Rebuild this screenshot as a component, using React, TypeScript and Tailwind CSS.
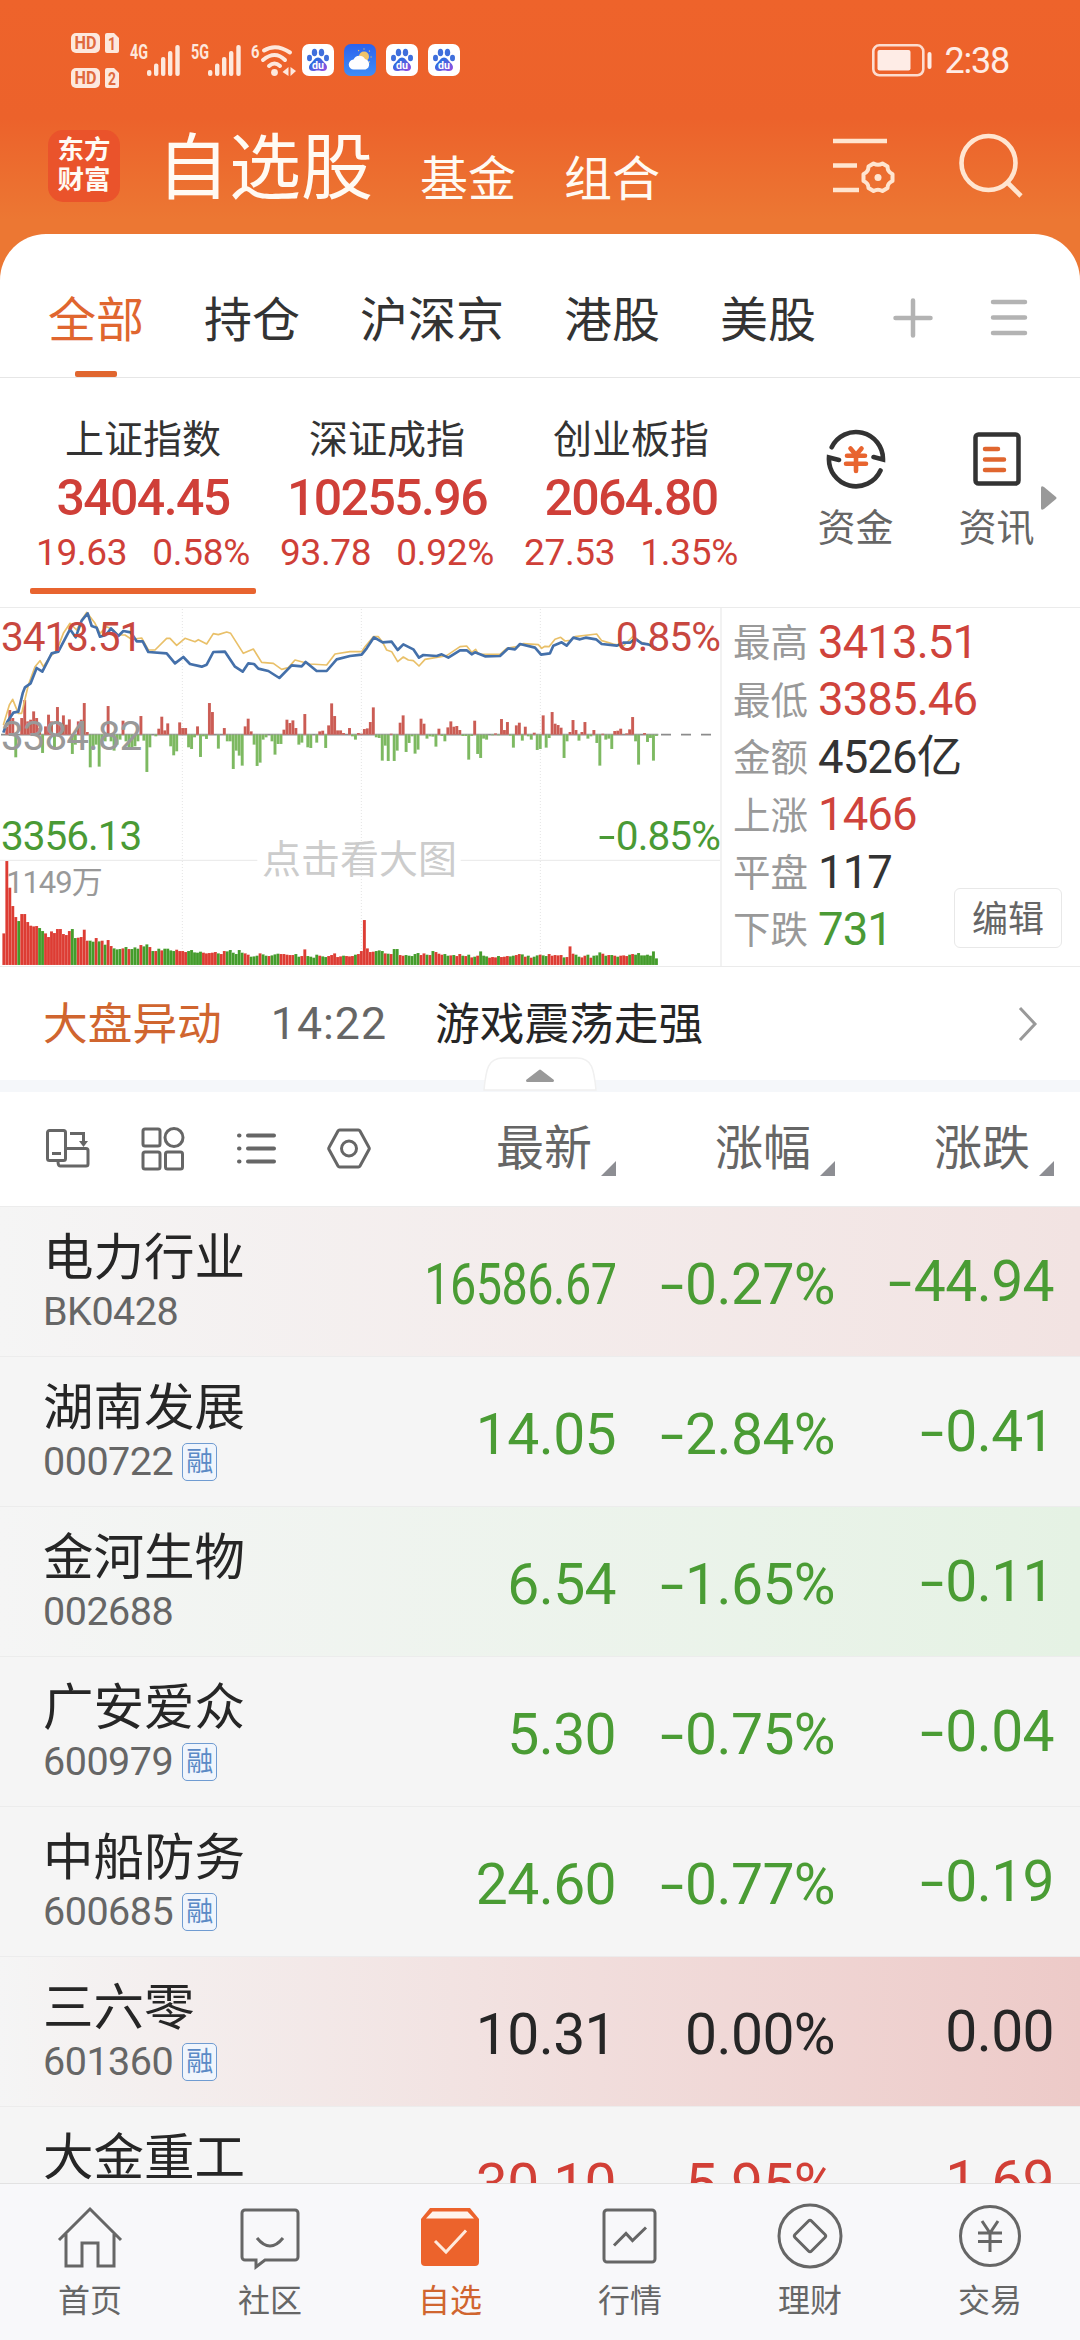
import type { ReactNode } from "react";

const tabs = ["全部", "持仓", "沪深京", "港股", "美股"];

const indexes = [
  { name: "上证指数", value: "3404.45", diff: "19.63", pct: "0.58%" },
  { name: "深证成指", value: "10255.96", diff: "93.78", pct: "0.92%" },
  { name: "创业板指", value: "2064.80", diff: "27.53", pct: "1.35%" },
];

const stats = [
  { label: "最高", value: "3413.51", color: "text-[#cf433b]" },
  { label: "最低", value: "3385.46", color: "text-[#cf433b]" },
  { label: "金额", value: "4526亿", color: "text-[#333333]" },
  { label: "上涨", value: "1466", color: "text-[#cf433b]" },
  { label: "平盘", value: "117", color: "text-[#333333]" },
  { label: "下跌", value: "731", color: "text-[#4a9a35]" },
];

const green = "text-[#4a9c34]";
const plain = "bg-[#f5f5f5]";

const stocks = [
  { name: "电力行业", code: "BK0428", price: "16586.67", pct: "-0.27%", diff: "-44.94", color: green, bg: "bg-linear-to-r from-[#f5f5f5] to-[#f2e3e2]", rong: false },
  { name: "湖南发展", code: "000722", price: "14.05", pct: "-2.84%", diff: "-0.41", color: green, bg: plain, rong: true },
  { name: "金河生物", code: "002688", price: "6.54", pct: "-1.65%", diff: "-0.11", color: green, bg: "bg-linear-to-r from-[#f5f5f5] to-[#e5f2e4]", rong: false },
  { name: "广安爱众", code: "600979", price: "5.30", pct: "-0.75%", diff: "-0.04", color: green, bg: plain, rong: true },
  { name: "中船防务", code: "600685", price: "24.60", pct: "-0.77%", diff: "-0.19", color: green, bg: plain, rong: true },
  { name: "三六零", code: "601360", price: "10.31", pct: "0.00%", diff: "0.00", color: "text-[#262626]", bg: "bg-linear-to-r from-[#f5f5f5] to-[#edcac8]", rong: true },
  { name: "大金重工", code: "", price: "30.10", pct: "5.95%", diff: "1.69", color: "text-[#d23f36]", bg: plain, rong: false },
];

// minute bars, negative = below the zero line
const flow = [
  0, 24, 74, 50, -68, 0, 50, 104, 40, 45, 70, 50, 20, -55, 25, 60, 40, -40, 83, 30, 58, 30, 46, -58, -30, 40, 45, 95, 8, -98,
  -35, -30, -96, -15, -20, 86, -20, -48, -30, -15, 42, -20, -40, -45, -35, -20, 56, -18, -112, -38, 0, -5, 18, 54, 13, 34, -35, -62, -50, 37,
  20, 20, -38, -43, -8, 25, -67, -5, -13, 95, 68, 0, -42, 0, 20, -20, -20, -103, -48, -63, -93, 25, 48, 10, -30, -94, -84, -15, -8, 0,
  -20, -60, -28, -28, 15, 45, 35, 43, 20, -30, -24, 62, -38, -40, 0, -24, 10, 12, -40, 28, 94, 56, 13, 13, 5, 0, 20, -5, -15, 5,
  3, 17, 19, 38, 82, -8, -10, -78, -33, -79, 3, -79, -48, 36, 58, -52, -25, -5, -57, -45, 48, 33, -12, -5, -6, -36, 18, -4, -20, 22,
  40, 24, 26, 14, -4, -4, -75, -4, 42, -58, -70, -12, -15, 0, -2, 4, -2, 47, 14, 38, -3, -39, 28, 36, -18, 24, -5, -15, 6, -46,
  -43, 58, -39, -10, 68, 33, 29, 21, -70, -20, 8, 44, 14, -18, 8, 38, -12, -5, 14, -25, -93, 3, -15, -12, -43, 11, 12, 18, 0, 4,
  16, 53, -20, -90, 0, 5, -22, -10, -78, -4,
];

// traded volume, negative = green bar
const volume = [
  95, 312, 232, 177, 144, -132, 153, 153, 129, 118, 116, 117, -111, -102, 95, 84, 101, 96, 108, 108, 93, 90, 102, -108, -81, 82, 84, 106, 73, -73,
  -70, 81, -71, 73, -61, 75, 57, -50, -47, -48, 50, -54, 48, -48, -53, -49, 60, -56, -62, 54, -42, 42, -49, 44, -49, -49, -44, -42, 46, 42,
  42, 39, -42, -45, -38, -37, -40, 37, 35, 36, 37, 39, -35, 33, 42, -41, -45, -37, -33, -45, -37, 35, 31, -25, -26, -28, 35, -32, -28, 27,
  -29, -32, -34, 33, 33, 31, 30, 30, -33, -25, 27, 47, -27, -25, -22, -31, 28, -26, -24, 27, 30, 35, 24, 26, -28, 27, 26, 27, -31, 33,
  42, 135, 50, 39, 40, -42, -44, -42, 35, -34, 33, -48, -48, 30, 28, -30, -28, -27, -33, -36, 30, 35, -31, 30, -42, 39, 34, 31, -33, -28,
  29, -30, 27, 33, -28, 27, -31, 23, -25, 28, -41, -28, -26, 22, 24, 23, -27, 24, 25, 27, -26, -28, 30, 33, -32, 25, -28, 22, -25, -29,
  31, -29, -27, 33, 28, 30, 29, 30, -23, 24, 56, 34, -31, -25, 23, 28, -31, 22, -28, -29, -38, 34, -28, 30, -30, 28, -25, 28, 29, 27,
  -31, 33, -31, -36, -29, -29, -31, -28, -41, -20,
];

const priceLine =
  "10,398 22,365 40,338 55,335 68,280 75,262 92,250 110,204 127,215 155,160 175,155 210,88 227,112 245,62 263,40 275,78 290,83 300,110 318,105 333,85 355,108 370,93 392,97 410,124 428,124 445,156 500,160 525,190 550,171 570,192 605,200 620,194 640,156 675,155 705,200 728,215 745,190 762,192 775,206 805,213 838,234 875,196 905,199 917,186 950,213 980,213 1010,178 1050,168 1085,164 1100,145 1122,112 1148,127 1175,125 1193,150 1210,133 1240,148 1257,173 1270,165 1310,168 1325,163 1345,173 1380,151 1400,151 1415,163 1425,157 1455,169 1500,168 1525,145 1545,148 1560,132 1605,143 1623,164 1650,160 1660,137 1685,127 1700,137 1720,113 1740,118 1757,113 1788,118 1805,132 1850,137 1870,128 1890,128 1905,116 1925,130 1945,133 1970,145";

const averageLine =
  "10,375 28,315 38,298 55,340 65,340 85,255 105,200 120,182 130,200 150,170 170,152 190,100 210,70 230,90 245,60 260,37 285,70 300,100 320,80 340,90 355,105 375,105 395,118 425,114 445,150 465,150 500,115 510,115 530,136 555,115 585,125 595,119 620,132 640,101 655,104 680,96 692,100 730,160 760,147 785,187 820,190 845,208 865,203 885,180 930,192 980,195 1005,162 1050,155 1085,155 1095,140 1120,110 1135,110 1148,127 1160,150 1175,155 1193,185 1210,171 1225,180 1240,182 1257,198 1275,178 1340,167 1380,140 1400,138 1415,157 1427,148 1435,162 1500,163 1520,145 1550,140 1570,131 1615,134 1625,145 1635,139 1647,140 1665,118 1682,112 1695,123 1710,121 1725,110 1790,102 1805,122 1840,132 1870,138 1900,108 1920,125 1965,142";

function HdBadge({ sim }: { sim: string }) {
  return (
    <svg className="overflow-visible" width="48" height="20" viewBox="0 0 48 20">
      <rect x="0" y="0" width="29" height="20" rx="5" fill="#fde8dd" />
      <path d="M34 2a2 2 0 0 1 2-2h7l5 5v13a2 2 0 0 1-2 2H36a2 2 0 0 1-2-2z" fill="#fde8dd" />
      <text x="3.5" y="16.2" fontSize="17.5" fontWeight="700" textLength="22" lengthAdjust="spacingAndGlyphs" fill="#e0693d">HD</text>
      <text x="37" y="16.5" fontSize="17.5" fontWeight="700" textLength="8" lengthAdjust="spacingAndGlyphs" fill="#e0693d">{sim}</text>
    </svg>
  );
}

function Signal({ label }: { label: string }) {
  return (
    <svg className="overflow-visible" width="51" height="34" viewBox="0 0 51 34" fill="#fde8dd">
      <text x="0" y="16" fontSize="19.5" fontWeight="700" textLength="18" lengthAdjust="spacingAndGlyphs">{label}</text>
      <rect x="17" y="27" width="4.4" height="6" rx="2" />
      <rect x="24" y="20.5" width="4.4" height="12.5" rx="2" />
      <rect x="31" y="14" width="4.4" height="19" rx="2" />
      <rect x="38" y="8" width="4.4" height="25" rx="2" />
      <rect x="45.3" y="2" width="4.4" height="31" rx="2" />
    </svg>
  );
}

function Wifi() {
  return (
    <svg className="overflow-visible" width="45" height="34" viewBox="0 0 45 34" fill="none" stroke="#fde8dd" strokeWidth="4" strokeLinecap="round">
      <text x="0" y="15" fontSize="19" fontWeight="700" textLength="8.5" lengthAdjust="spacingAndGlyphs" fill="#fde8dd" stroke="none">6</text>
      <path d="M13 7.5Q25 0 39 9.500M12 17Q24 7 34 17M18 23Q23.500 18 29 23" />
      <circle cx="23.5" cy="29.5" r="3.4" fill="#fde8dd" stroke="none" />
      <path d="M37.500 24v9l-6-4zM39.500 24v9l5.500-5z" fill="#fde8dd" stroke="none" />
    </svg>
  );
}

function Baidu() {
  return (
    <svg className="overflow-visible" width="32" height="32" viewBox="0 0 32 32">
      <defs>
        <linearGradient id="paw" x1="0" y1="0" x2="1" y2="1">
          <stop offset="0.3" stopColor="#2f6be0" />
          <stop offset="1" stopColor="#9a4be0" />
        </linearGradient>
      </defs>
      <rect width="32" height="32" rx="7" fill="#fff" />
      <ellipse cx="12.5" cy="8.5" rx="2.7" ry="3.8" fill="#3f6fdc" />
      <ellipse cx="19.5" cy="8.5" rx="2.7" ry="3.8" fill="#3f6fdc" />
      <ellipse cx="7.5" cy="14" rx="2.5" ry="3.3" fill="#3f6fdc" />
      <ellipse cx="24.5" cy="14" rx="2.5" ry="3.3" fill="#3f6fdc" />
      <path d="M16 13.500c3 0 4 3 6.500 5.200 4 3.300 3 8.300-1.500 8.300-2 0-3-.5-5-.5s-3 .5-5 .5c-4.500 0-5.500-5-1.500-8.300C12 16.500 13 13.500 16 13.500z" fill="url(#paw)" />
      <text x="10" y="25" fontSize="10.5" fontWeight="700" textLength="12" lengthAdjust="spacingAndGlyphs" fill="#fff">du</text>
    </svg>
  );
}

function Weather() {
  return (
    <svg width="32" height="32" viewBox="0 0 32 32">
      <defs>
        <linearGradient id="sky" x1="0" y1="0" x2="0" y2="1">
          <stop offset="0" stopColor="#2c62ee" />
          <stop offset="1" stopColor="#3f8df5" />
        </linearGradient>
      </defs>
      <rect width="32" height="32" rx="7" fill="url(#sky)" />
      <circle cx="20" cy="12.5" r="5" fill="#f0c468" />
      <path d="M20 5.500v-1M15 7l-.7-.8M25 7.500l.8-.8M26.500 13h1.200M25 17.500l.8.8" stroke="#f0c468" strokeWidth="1.2" />
      <path d="M10 25.500a5 5 0 0 1-.5-10 6.500 6.500 0 0 1 11.500-.5 5.500 5.500 0 0 1 .5 10.500z" fill="#fdfdff" />
    </svg>
  );
}

function StatusBar() {
  return (
    <div className="flex h-[120px] items-center pl-[71px]">
      <div className="flex w-[48px] flex-col gap-[15px]">
        <HdBadge sim="1" />
        <HdBadge sim="2" />
      </div>
      <div className="ml-[11px] flex items-center gap-[10px]">
        <Signal label="4G" />
        <Signal label="5G" />
      </div>
      <div className="ml-[9px]"><Wifi /></div>
      <div className="ml-[6px] flex gap-[10px]">
        <Baidu />
        <Weather />
        <Baidu />
        <Baidu />
      </div>
      <svg className="ml-auto" width="60" height="34" viewBox="0 0 60 34" fill="#feece6">
        <rect x="1.3" y="2.3" width="50" height="30" rx="6" fill="none" stroke="#fcdccf" strokeWidth="2.6" />
        <rect x="5.5" y="7" width="33" height="20.5" rx="2" />
        <rect x="55.5" y="9" width="4" height="17" rx="2" />
      </svg>
      <span className="mr-[71px] ml-[12px] pt-[2px] text-[36px] leading-none tracking-[-1.2px] text-[#feece6]">2:38</span>
    </div>
  );
}

function TitleBar() {
  return (
    <div className="flex h-[114px] items-center pb-[22px] text-[#fffaf3]">
      <div className="ml-[48px] flex h-[72px] w-[72px] flex-col items-center justify-center rounded-[15px] bg-[#ea532b] pb-[2px] text-[26.5px] leading-[30px] font-bold">
        <span>东方</span>
        <span>财富</span>
      </div>
      <span className="mt-[5px] ml-[37px] text-[72px] leading-[74px]">自选股</span>
      <span className="mt-[28px] ml-[47px] text-[48px] leading-none">基金</span>
      <span className="mt-[28px] ml-[48px] text-[48px] leading-none">组合</span>
      <svg className="ml-auto" width="64" height="60" viewBox="0 0 64 60" fill="none" stroke="#ffe5d0" strokeWidth="4.6">
        <path d="M1 5H55M1 29.500H25M1 54H27" />
        <path d="M41.500 27.500q4.500 2.500 9 0l5 3q0 5.500 5 7.500v7q-5 2-5 7l-5 3q-4.500-2.500-9 0l-5-3q0-5-5-7v-7q5-2 5-7.500z" strokeLinejoin="round" strokeWidth="4" />
        <circle cx="46" cy="41.5" r="3.5" fill="#ffe5d0" stroke="none" />
      </svg>
      <svg className="mr-[57px] ml-[63px]" width="64" height="66" viewBox="0 0 64 66" fill="none" stroke="#ffe5d0" strokeWidth="4.6">
        <circle cx="29.5" cy="30" r="27" />
        <path d="M48 49L62 63" />
      </svg>
    </div>
  );
}

function Tabs() {
  return (
    <div className="flex h-[144px] items-center gap-[60px] border-b border-[#e6e6e6] pl-[48px] text-[48px] text-[#333333]">
      {tabs.map((tab, i) => (
        <div key={tab} className={i === 0 ? "flex h-full flex-col items-center text-[#e0662f]" : "flex h-full flex-col"}>
          <span className="mt-[51px] mb-[20px] h-[66px] leading-[72px]">{tab}</span>
          {i === 0 && <i className="h-[6px] w-[42px] rounded-[2px] bg-[#e0662f]" />}
        </div>
      ))}
      <svg className="mt-[24px] ml-[17px]" width="40" height="40" viewBox="0 0 40 40" stroke="#b3b3b3" strokeWidth="4.5" strokeLinecap="round">
        <path d="M2.500 20H37.500M20 2.500V37.500" />
      </svg>
      <svg className="mt-[24px] -ml-[4px]" width="40" height="40" viewBox="0 0 40 40" stroke="#b3b3b3" strokeWidth="4.5" strokeLinecap="round">
        <path d="M4 4H36M4 19.500H36M4 35H36" />
      </svg>
    </div>
  );
}

function Shortcut({ label, children }: { label: string; children: ReactNode }) {
  return (
    <div className="flex w-[141px] flex-col items-center">
      <div className="flex h-[60px] items-center">{children}</div>
      <span className="mt-[17px] text-[38px] leading-[44px] text-[#666666]">{label}</span>
    </div>
  );
}

function IndexCards() {
  return (
    <div className="flex h-[229px] pl-[21px]">
      {indexes.map((item, i) => (
        <div key={item.name} className="flex w-[244px] flex-col items-center text-[#cf3f38]">
          <span className="mt-[39px] h-[44px] text-[39px] leading-[46px] text-[#333333]">{item.name}</span>
          <span className="mt-[9px] h-[56px] text-[50px] leading-[56px] font-medium tracking-[-1.6px]">{item.value}</span>
          <span className="mt-[5px] flex h-[44px] gap-[25px] text-[37px] leading-[44px] tracking-[-0.3px]">
            <span>{item.diff}</span>
            <span>{item.pct}</span>
          </span>
          {i === 0 && <i className="mt-[13px] h-[6px] w-[226px] rounded-[2px] bg-[#e8642f]" />}
        </div>
      ))}
      <div className="mt-[51px] ml-[32px] flex">
        <Shortcut label="资金">
          <svg width="60" height="60" viewBox="0 0 60 60" fill="none" stroke="#333333" strokeWidth="4.6" strokeLinecap="round">
            <path d="M5.700 18.300A27 27 0 0 1 57 30.500L47.500 28M54.500 41.500A27 27 0 0 1 3 28.500L13 31" />
            <path d="M24.500 19.500L30 26L35.500 19.500M21 26.700H39M20 34.700H40M30 27V42" stroke="#e8642f" />
          </svg>
        </Shortcut>
        <Shortcut label="资讯">
          <svg width="50" height="60" viewBox="0 0 50 60" fill="none" stroke="#333333" strokeWidth="4.5">
            <rect x="3.500" y="5.500" width="43" height="49" rx="3" />
            <path d="M13 20H26M13 30.500H32M13 41H32" stroke="#e0662f" strokeLinecap="round" />
          </svg>
        </Shortcut>
      </div>
      <svg className="-ml-[27px] mt-[107px]" width="17" height="26" viewBox="0 0 17 26" fill="#999999">
        <path d="M1 3q0-3 3-1l12 10q1 1 0 2L4 24q-3 2-3-1z" />
      </svg>
    </div>
  );
}

function Chart() {
  return (
    <div className="relative h-[358px] w-[720px] text-[40.5px] leading-none">
      <svg className="block" width="720" height="358" viewBox="0 24 2160 1074">
        <path d="M547 27V1090M1084 27V1090M1621 27V1090" stroke="#e4e4e4" strokeWidth="3" strokeDasharray="3 6" />
        <path d="M0 781H772M1382 781H2160" stroke="#e8e8e8" strokeWidth="3" />
        <path d="M3 404H1975M1983 404h30M2043 404h30M2103 404h30" stroke="#8c8c8c" strokeWidth="5" />
        {flow.map((v, i) =>
          v === 0 ? null : (
            <rect key={i} x={7 + i * 8.94} y={v > 0 ? 404 - v : 404} width="8.94" height={Math.abs(v)} fill={v > 0 ? "#cb5c54" : "#7db961"} stroke="#fff" strokeOpacity="0.25" />
          )
        )}
        {volume.map((v, i) => (
          <rect key={i} x={7 + i * 8.94} y={1095 - Math.abs(v)} width="8.94" height={Math.abs(v)} fill={v > 0 ? "#dd3c33" : "#449c2b"} stroke="#fff" strokeOpacity="0.3" />
        ))}
        <polyline points={averageLine} fill="none" stroke="#e9c069" strokeWidth="5" strokeLinejoin="round" />
        <polyline points={priceLine} fill="none" stroke="#4470aa" strokeWidth="8" strokeLinejoin="round" />
      </svg>
      <span className="absolute top-[9px] left-[1px] tracking-[-1px] text-[#c8473f]">3413.51</span>
      <span className="absolute top-[108px] left-[1px] tracking-[-1px] text-[#999999]">3384.82</span>
      <span className="absolute top-[208px] left-[1px] tracking-[-1px] text-[#4a9a35]">3356.13</span>
      <span className="absolute top-[9px] right-0 tracking-[-0.9px] text-[#c8473f]">0.85%</span>
      <span className="absolute top-[208px] right-0 tracking-[-0.9px] text-[#4a9a35]"><Num text="-0.85%" /></span>
      <span className="absolute top-[259px] left-[6px] text-[31px] tracking-[-1px] text-[#999999]">1149万</span>
      <span className="absolute top-[230px] left-[262px] text-[39px] leading-[44px] text-[#cccccc]">点击看大图</span>
    </div>
  );
}

// the minus sign is drawn wider than the font's hyphen
function Num({ text }: { text: string }) {
  if (!text.startsWith("-")) return <>{text}</>;
  return (
    <>
      <span className="mr-[0.11em] inline-block scale-x-[1.5]">-</span>
      {text.slice(1)}
    </>
  );
}

function Stats() {
  return (
    <div className="relative flex-1 border-l-2 border-[#f2f2f2] pt-[6px] pl-[11px]">
      {stats.map((s) => (
        <div key={s.label} className="flex h-[57.4px] items-center leading-none">
          <span className="mt-[3px] text-[37.5px] text-[#999999]">{s.label}</span>
          <span className={`ml-[10px] text-[45.5px] tracking-[-0.9px] ${s.color}`}>{s.value}</span>
        </div>
      ))}
      <div className="absolute top-[280px] right-[18px] flex h-[60px] w-[108px] items-center justify-center rounded-[6px] border border-[#e8e8e8] bg-white pt-[3px] text-[36px] leading-none text-[#666666]">
        编辑
      </div>
    </div>
  );
}

function News() {
  return (
    <div className="relative flex h-[126px] items-center border-t border-b-12 border-t-[#ebebeb] border-b-[#f5f7fa] pl-[43px] text-[44.7px] leading-none">
      <span className="mt-[4px] text-[#d0652f]">大盘异动</span>
      <span className="mt-[1px] ml-[49px] tracking-[1px] text-[#666666]">14:22</span>
      <span className="mt-[4px] ml-[48px] text-[#262626]">游戏震荡走强</span>
      <svg className="mr-[42px] ml-auto" width="20" height="36" viewBox="0 0 20 36" fill="none" stroke="#999999" strokeWidth="3">
        <path d="M2 2L17 18L2 34" />
      </svg>
      <svg className="absolute top-[90px] left-[483px]" width="114" height="34" viewBox="0 0 114 34">
        <path d="M1 33C3 12 5 1 20 1H94C109 1 111 12 113 33z" fill="#fff" stroke="#f0f0f0" strokeWidth="1.5" />
        <path d="M43 23L56 13q1-1 2 0L71 23q0 2-1 2H44q-1 0-1-2z" fill="#999999" />
      </svg>
    </div>
  );
}

function ListHead() {
  return (
    <div className="flex h-[114px] items-center text-[48px] leading-none text-[#666666]">
      <div className="flex w-[372px] items-center gap-[51px] pl-[46px]">
        <svg width="44" height="44" viewBox="0 0 44 44" fill="none" stroke="#666666" strokeWidth="3">
          <path d="M3.500 3.500h14a2 2 0 0 1 2 2v26a2 2 0 0 1-2 2h-14a2 2 0 0 1-2-2v-26a2 2 0 0 1 2-2zM6 26.500h9" />
          <path d="M20 21.500H40a2 2 0 0 1 2 2V37a2 2 0 0 1-2 2H14q-2 0-2-5M24 6.500H37.500V15" />
          <path d="M33 14h9l-4.500 6z" fill="#666666" stroke="none" />
        </svg>
        <svg width="44" height="44" viewBox="0 0 44 44" fill="none" stroke="#666666" strokeWidth="3">
          <rect x="2" y="2" width="17" height="17" rx="2" />
          <circle cx="33" cy="10.5" r="9" />
          <rect x="2" y="25" width="17" height="17" rx="2" />
          <rect x="24.5" y="25" width="17" height="17" rx="2" />
        </svg>
        <svg width="40" height="44" viewBox="0 0 40 44" fill="none" stroke="#666666" strokeWidth="4" strokeLinecap="round">
          <path d="M3 8.500h.5M3 21.500h.5M3 34.500h.5M12 8.500H38M12 21.500H38M12 34.500H38" />
        </svg>
        <svg width="44" height="44" viewBox="0 0 44 44" fill="none" stroke="#666666" strokeWidth="3">
          <path d="M13 3H31a2 2 0 0 1 2 1L42 20.500a2 2 0 0 1 0 2L33 39a2 2 0 0 1-2 1H13a2 2 0 0 1-2-1L2 22.500a2 2 0 0 1 0-2L11 4a2 2 0 0 1 2-1z" />
          <circle cx="22" cy="21.5" r="7.5" />
        </svg>
      </div>
      {["最新", "涨幅", "涨跌"].map((h, i) => (
        <div key={h} className={i === 0 ? "flex w-[244px] items-center justify-end" : "flex w-[219px] items-center justify-end"}>
          <span>{h}</span>
          <svg className="mt-[38px] ml-[9px]" width="15" height="15" viewBox="0 0 15 15">
            <path d="M15 0V15H0z" fill="#8d8e93" />
          </svg>
        </div>
      ))}
    </div>
  );
}

function StockList() {
  return (
    <div className="h-[977px] overflow-hidden">
      {stocks.map((s) => (
        <div key={s.name} className={`flex h-[150px] items-center border-t border-[#ececec] text-[57px] leading-none tracking-[-0.6px] ${s.bg}`}>
          <div className="w-[372px] pl-[43px]">
            <div className="text-[50.5px] leading-[60px] tracking-normal text-[#262626]">{s.name}</div>
            <div className="flex h-[48px] items-center text-[39.5px] leading-none tracking-[-0.5px] text-[#666666]">
              {s.code}
              {s.rong && (
                <span className="ml-[9px] flex h-[38px] w-[35px] items-center justify-center rounded-[5px] border border-[#6f9bd1] bg-[#f0f5fc] pt-[2px] text-[27px] tracking-normal text-[#5b8ac6]">
                  融
                </span>
              )}
            </div>
          </div>
          <div className={`flex w-[244px] justify-end pt-[6px] ${s.color}`}>
            <span className={s.price.length > 7 ? "origin-right scale-x-[0.82]" : ""}>{s.price}</span>
          </div>
          <div className={`w-[219px] pt-[6px] text-right ${s.color}`}><Num text={s.pct} /></div>
          <div className={`w-[219px] pb-[1px] text-right ${s.color}`}><Num text={s.diff} /></div>
        </div>
      ))}
    </div>
  );
}

const navItems = [
  {
    label: "首页",
    icon: <path d="M3 34L34 3L65 34M10 28V60H26V37H42V60H58V28" />,
  },
  {
    label: "社区",
    icon: <path d="M9 4H59a3 3 0 0 1 3 3V51a3 3 0 0 1-3 3H29L20 61V54H9a3 3 0 0 1-3-3V7a3 3 0 0 1 3-3zM21 32Q34 48 47 32" />,
  },
  {
    label: "自选",
    icon: (
      <>
        <path d="M14 2H54L63 13V56a4 4 0 0 1-4 4H9a4 4 0 0 1-4-4V13z" fill="#ec632c" stroke="none" />
        <path d="M16.500 5.500H51.500L58 12.500H10z" fill="#fff4ec" stroke="none" />
        <path d="M19 35L30 46L50 24.500" stroke="#ffe9dc" />
      </>
    ),
  },
  {
    label: "行情",
    icon: (
      <>
        <rect x="8" y="4" width="51" height="52" rx="3" />
        <path d="M18 39.500L30 27.500L36.500 34.500L50 21.500" />
      </>
    ),
  },
  {
    label: "理财",
    icon: (
      <>
        <circle cx="34" cy="30" r="31" />
        <path d="M32.500 15q1.500-1.500 3 0L49 28.500q1.500 1.500 0 3L35.500 45q-1.500 1.500-3 0L19 31.500q-1.500-1.500 0-3z" />
      </>
    ),
  },
  {
    label: "交易",
    icon: (
      <>
        <circle cx="34" cy="30" r="29.5" />
        <path d="M26 15L34 27L42 15M22 27H46M22 35.500H46M34 26V46" />
      </>
    ),
  },
];

function BottomNav() {
  return (
    <div className="grid h-[157px] grid-cols-6 border-t border-[#e2e2e2] bg-[#f8f8fa]">
      {navItems.map((item, i) => (
        <div key={item.label} className={i === 2 ? "flex flex-col items-center text-[#d0652f]" : "flex flex-col items-center text-[#666666]"}>
          <svg className="mt-[22px] overflow-visible" width="68" height="64" viewBox="0 0 68 64" fill="none" stroke="#666666" strokeWidth="3">
            {item.icon}
          </svg>
          <span className="mt-[13px] text-[32px] leading-[36px]">{item.label}</span>
        </div>
      ))}
    </div>
  );
}

export default function App() {
  return (
    <div className="h-[2340px] w-[1080px] overflow-hidden bg-[linear-gradient(180deg,#ee632b_0px,#ec622b_118px,#ec7733_220px,#ec7733_300px)] font-['Roboto','Noto_Sans_CJK_SC',sans-serif]">
      <StatusBar />
      <TitleBar />
      <div className="rounded-t-[46px] bg-white">
        <Tabs />
        <IndexCards />
        <div className="flex border-t border-[#ebebeb]">
          <Chart />
          <Stats />
        </div>
        <News />
        <ListHead />
        <StockList />
        <BottomNav />
      </div>
    </div>
  );
}
